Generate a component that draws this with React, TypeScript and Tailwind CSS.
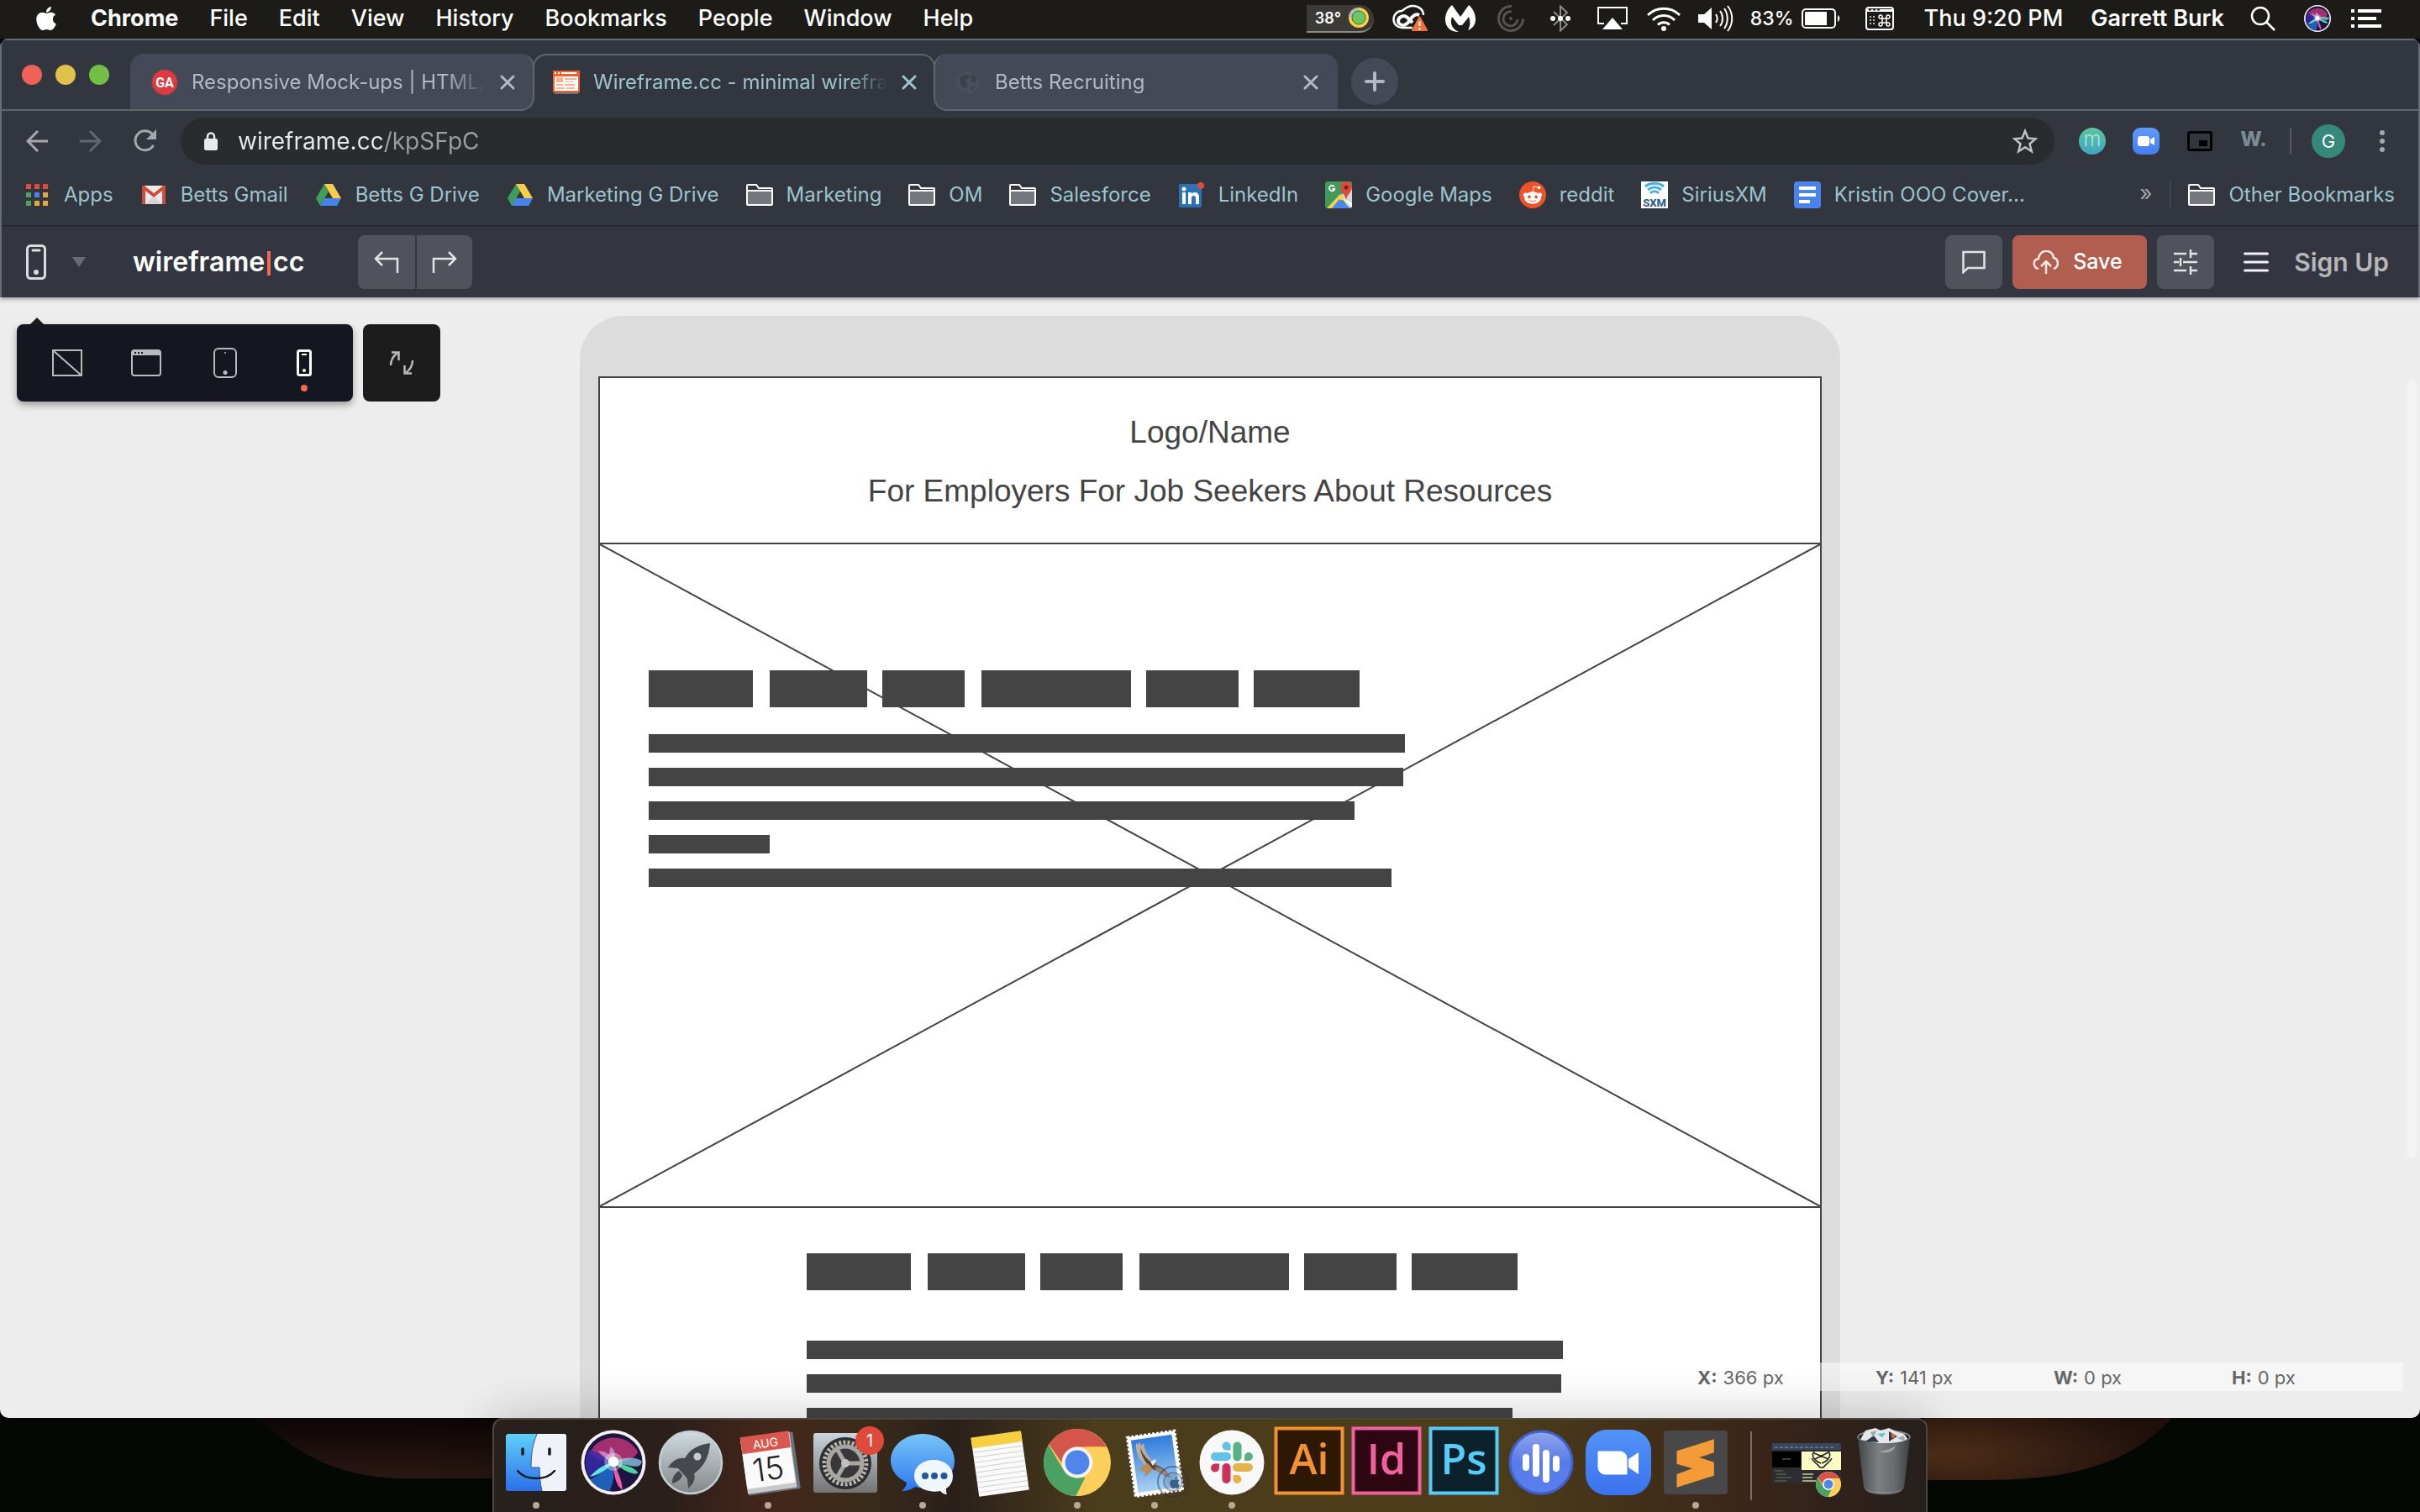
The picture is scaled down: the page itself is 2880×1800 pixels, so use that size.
import React from "react";
import type { ReactNode } from "react";
import { FaApple, FaRedditAlien } from "react-icons/fa";

/* ---------- menu bar ---------- */

const MENUS = ["File", "Edit", "View", "History", "Bookmarks", "People", "Window", "Help"];

function CreativeCloud() {
  return (
    <svg viewBox="0 0 42 34" className="h-[34px] w-[42px]" fill="none">
      <path d="M24 28H12A10 10 0 0 1 11 8c3-1 6-6 13-6 8 0 13 5 13 11" stroke="#fff" strokeWidth="2.500" />
      <path d="M24 22l-6-6c-4-4-11-1-11 4 0 3 3 5 6 5s5-2 8-6c3-5 7-8 11-6" stroke="#fff" strokeWidth="4" />
      <path d="M33 13.500l8.500 15.500h-17z" transform="translate(-.5 2)" fill="#f3703a" stroke="#f3703a" strokeWidth="2" strokeLinejoin="round" />
      <path d="M32.500 20v6M32.500 28v2.500" stroke="#fff" strokeWidth="2" />
    </svg>
  );
}

function Malware() {
  return (
    <svg viewBox="0 0 36 33" className="h-[33px] w-[36px]" fill="#fff">
      <path d="M8 0l10 14L28 0c6 5 8 12 8 17 0 7-4 11-9 13 3-5 3-11 1-16l-8 10h-4L8 14c-3 8 0 14 8 18-10 0-16-6-16-15C0 11 3 4 8 0z" />
    </svg>
  );
}

function Spiral() {
  return (
    <svg viewBox="0 0 32 32" className="size-8" fill="none" stroke="#55544f" strokeWidth="3">
      <path d="M17 1.500a14.500 14.500 0 1 0 13.500 15" />
      <path d="M17 8a8.500 8.500 0 1 0 7 9" />
      <circle cx="16" cy="16" r="2" fill="#55544f" stroke="none" />
    </svg>
  );
}

function Bluetooth() {
  return (
    <svg viewBox="0 0 24 32" className="h-8 w-6" fill="none">
      <path d="M4 8l16 15-8 7.500V1.500L20 9 4 24" stroke="#8b8a86" strokeWidth="2" />
      <circle cx="3" cy="16" r="3" fill="#fff" />
      <circle cx="12" cy="16" r="3" fill="#fff" />
      <circle cx="21" cy="16" r="3" fill="#fff" />
    </svg>
  );
}

function AirPlay() {
  return (
    <svg viewBox="0 0 36 28" className="h-7 w-9">
      <path d="M8 20H1V1h34v19h-7" fill="none" stroke="#fff" strokeWidth="2" />
      <path d="M18 13l12 14H6z" fill="#fff" />
    </svg>
  );
}

function Wifi() {
  return (
    <svg viewBox="0 0 42 30" className="h-[30px] w-[42px]" fill="none" stroke="#fff" strokeWidth="3">
      <path d="M2 11a27 27 0 0 1 38 0M8 17a18 18 0 0 1 26 0M14 22.500a10 10 0 0 1 14 0" />
      <circle cx="21" cy="27" r="3" fill="#fff" stroke="none" />
    </svg>
  );
}

function Volume() {
  return (
    <svg viewBox="0 0 42 32" className="h-8 w-[42px]" fill="none" stroke="#fff" strokeWidth="2">
      <path d="M0 11h7l9-8v26l-9-8H0z" fill="#fff" stroke="none" />
      <path d="M21 11c2 3 2 7 0 10M26 7c4 5 4 13 0 18M31 4c5 7 5 17 0 24M35 1c7 9 7 21 0 30" />
    </svg>
  );
}

function Battery() {
  return (
    <svg viewBox="0 0 46 24" className="h-6 w-[46px]" fill="none">
      <rect x="1" y="1" width="39" height="22" rx="4" stroke="#fff" strokeWidth="2" />
      <rect x="4" y="4" width="26" height="16" fill="#fff" />
      <path d="M43 8c3 2 3 6 0 8z" fill="#fff" />
    </svg>
  );
}

function KeyboardViewer() {
  return (
    <svg viewBox="0 0 34 28" className="h-7 w-[34px]" fill="none">
      <rect x="1" y="1" width="32" height="26" rx="3" stroke="#fff" strokeWidth="2" />
      <path d="M1 3h32v3H1z" fill="#fff" />
      <path d="M4 3.500h3M9 3.500h3M14 3.500h3" stroke="#222" strokeWidth="2" />
      <path d="M5 12h2M9 12h2M5 16h2M9 16h2M5 20h2M9 20h2" stroke="#bbb" strokeWidth="2" />
      <path
        d="M20 14h5v5h-5zM20 14h-2a2 2 0 1 1 2-2zM25 14v-2a2 2 0 1 1 2 2zM20 19v2a2 2 0 1 1-2-2zM25 19h2a2 2 0 1 1-2 2z"
        stroke="#fff"
        strokeWidth="1.500"
      />
    </svg>
  );
}

function SiriShapes() {
  return (
    <>
      <circle cx="50" cy="50" r="50" fill="#f4f1f4" />
      <circle cx="50" cy="50" r="45" fill="#1d1440" />
      <path d="M14 36C22 8 70 0 88 34c-8 14-26 18-38 14C36 44 28 50 14 36z" fill="#b93577" opacity=".85" />
      <path d="M12 30c14 4 32 14 38 20L14 74C4 60 6 44 12 30z" fill="#3a2bb0" opacity=".8" />
      <path d="M14 76c14-6 28-18 36-26 2 18 0 34-6 44C32 93 20 86 14 76z" fill="#1f67c4" opacity=".9" />
      <path d="M50 50c12-8 34-10 44-2-2 12-14 8-24 6-8-1-14-2-20-4z" fill="#8fd0e6" opacity=".75" />
      <path d="M50 50c14 2 34 8 38 16-6 6-26-6-38-16z" fill="#4fd39a" />
      <path d="M50 50c6 12 14 30 14 42-10-4-14-26-14-42z" fill="#ee5aa8" />
      <path d="M50 50c-10 12-24 20-36 22 8-10 22-20 36-22z" fill="#5fe3e6" />
      <path d="M50 50c-2-10-10-18-24-18 6 8 14 14 24 18zM50 50c4-8 4-18-4-24-4 8-2 16 4 24z" fill="#d9a4e0" opacity=".7" />
      <circle cx="50" cy="49" r="8" fill="#fff" />
      <circle cx="50" cy="49" r="14" fill="#fff" opacity=".35" />
    </>
  );
}

function MenuBar() {
  return (
    <header className="flex h-[46px] shrink-0 items-center bg-[#1c1b17] pb-[2px] text-[27px] font-medium text-white">
      <FaApple className="ml-[39px] size-[32px] shrink-0" />
      <nav className="ml-[37px] flex items-center gap-[37px]">
        <span className="font-bold">Chrome</span>
        {MENUS.map((m) => (
          <span key={m}>{m}</span>
        ))}
      </nav>
      <div className="ml-auto mr-[46px] flex items-center">
        <div className="mr-[22px] flex h-[33px] w-[80px] items-center justify-between rounded-l-md rounded-r-full border-b-2 border-[#8b8a86] bg-[#3b3a36] pl-[10px] pr-[6px] text-[18px] font-semibold">
          38°
          <svg viewBox="0 0 24 24" className="size-6">
            <circle cx="12" cy="12" r="10" fill="#6cc063" stroke="#fccf46" strokeWidth="4" />
            <path d="M2 12A10 10 0 0 1 12 2" stroke="#b9b8b4" strokeWidth="4" fill="none" />
            <circle cx="12" cy="12" r="8" fill="#70c466" stroke="#2c7a2c" strokeWidth="1" />
          </svg>
        </div>
        <CreativeCloud />
        <span className="w-[21px]" />
        <Malware />
        <span className="w-[26px]" />
        <Spiral />
        <span className="w-[31px]" />
        <Bluetooth />
        <span className="w-[32px]" />
        <AirPlay />
        <span className="w-[22px]" />
        <Wifi />
        <span className="w-[20px]" />
        <Volume />
        <span className="ml-[20px] text-[23px]">83%</span>
        <span className="w-[9px]" />
        <Battery />
        <span className="w-[30px]" />
        <KeyboardViewer />
        <time className="ml-[36px]">Thu 9:20 PM</time>
        <span className="ml-[33px] mr-[31px] font-semibold">Garrett Burk</span>
        <svg viewBox="0 0 30 30" className="size-[30px]" fill="none" stroke="#fff" strokeWidth="2.500">
          <circle cx="12" cy="12" r="10" />
          <path d="M19 19l10 10" />
        </svg>
        <svg viewBox="0 0 100 100" className="ml-[34px] size-8">
          <SiriShapes />
        </svg>
        <svg viewBox="0 0 36 22" className="ml-[24px] h-[22px] w-9" stroke="#fff" strokeWidth="4">
          <path d="M0 2h4M8 2h28M0 11h4M8 11h22M0 20h4M8 20h28" />
        </svg>
      </div>
    </header>
  );
}

/* ---------- browser tabs ---------- */

function CloseIcon() {
  return (
    <svg viewBox="0 0 18 18" className="size-[18px]" stroke="currentColor" strokeWidth="3" strokeLinecap="round">
      <path d="M2 2l14 14M16 2L2 16" />
    </svg>
  );
}

function TabBody({ icon, title, label, frame }: { icon: ReactNode; title: string; label: string; frame: string }) {
  return (
    <div className={"flex items-center " + frame}>
      <span className="flex w-8 shrink-0 justify-center">{icon}</span>
      <span className="ml-4 mr-4 min-w-0 flex-1 overflow-hidden whitespace-nowrap text-[24px] [mask-image:linear-gradient(to_right,black_86%,transparent)]">
        {title}
      </span>
      <button aria-label={label}>
        <CloseIcon />
      </button>
    </div>
  );
}

function TabStrip() {
  return (
    <div className="flex h-[84px] items-end bg-[#32363f]">
      <div className="flex h-full w-[153px] items-center gap-4 border-b-2 border-[#62656b] pl-6">
        <button aria-label="Close window" className="size-6 rounded-full bg-[#ee6259]" />
        <button aria-label="Minimise window" className="size-6 rounded-full bg-[#e1c04c]" />
        <button aria-label="Zoom window" className="size-6 rounded-full bg-[#71bf46]" />
      </div>
      <div className="h-[68px] w-[481px] rounded-t-[16px] rounded-br-[16px] border-b-2 border-r-2 border-[#62656b] bg-[#444957] text-[#b4b8c6]">
        <TabBody
          frame="h-[68px] pl-[25px] pr-[21px]"
          label="Close Responsive Mock-ups"
          title="Responsive Mock-ups | HTML,"
          icon={
            <svg viewBox="0 0 32 32" className="size-8">
              <circle cx="16" cy="16" r="14.500" fill="#dd3a42" stroke="#dd3a42" strokeWidth="2" strokeDasharray="2 1.500" />
              <text x="16" y="22" textAnchor="middle" fontSize="16" fontWeight="700" fill="#fff" fontFamily="Roboto">
                GA
              </text>
            </svg>
          }
        />
      </div>
      <div className="-ml-[2px] mt-[16px] h-[52px] w-[479px] self-start rounded-t-[16px] border-x-2 border-t-2 border-[#62656b] bg-[#32363f] text-[#9dc4cc]">
        <TabBody
          frame="h-[64px] pl-[22px] pr-[20px]"
          label="Close Wireframe.cc"
          title="Wireframe.cc - minimal wirefra"
          icon={
            <svg viewBox="0 0 32 28" className="h-7 w-8">
              <path d="M2 26h28v2H2z" fill="#6d6f76" />
              <path d="M0 0h32v26H0z" fill="#f0622d" />
              <path d="M2 7h28v17H2z" fill="#fff" />
              <path d="M2 2h2v2H2zM6 2h2v2H6zM10 2h18v2H10z" fill="#fff" />
              <path d="M4 8h8v6H4zM14 9h14v2H14zM14 13h10v1H14zM4 16h8v2H4zM14 16h12v2H14zM4 20h10v2H4zM16 20h10v2H16z" fill="#f6b08d" />
            </svg>
          }
        />
      </div>
      <div className="-ml-[2px] h-[68px] w-[481px] rounded-t-[16px] rounded-bl-[16px] border-b-2 border-l-2 border-[#62656b] bg-[#444957] text-[#b4b8c6]">
        <TabBody
          frame="h-[68px] pl-[23px] pr-[23px]"
          label="Close Betts Recruiting"
          title="Betts Recruiting"
          icon={
            <svg viewBox="0 0 28 28" className="size-7">
              <circle cx="14" cy="14" r="13" fill="#4b4f59" stroke="#4b4d57" strokeWidth="2" />
              <path d="M4 8l8-4 4 4-5 4 3 5-4 5-6-6zM18 3l7 7-3 5-5-3zM17 20l6-2-4 6z" fill="#3d424e" />
            </svg>
          }
        />
      </div>
      <div className="flex h-full flex-1 items-center border-b-2 border-[#62656b] pl-4 pt-[16px]">
        <button aria-label="New tab" className="flex size-14 items-center justify-center rounded-full bg-[#444957]">
          <svg viewBox="0 0 24 24" className="size-6" stroke="#b4b8c6" strokeWidth="4" strokeLinecap="round">
            <path d="M12 2v20M2 12h20" />
          </svg>
        </button>
      </div>
    </div>
  );
}

/* ---------- address bar ---------- */

function AddressBar() {
  return (
    <div className="flex h-[72px] items-center pl-[29px] pr-10">
      <button aria-label="Back">
        <svg viewBox="0 0 26 26" className="size-[26px]" fill="none" stroke="#a5a8ab" strokeWidth="3">
          <path d="M26 13H3M14 1L2 13l12 12" />
        </svg>
      </button>
      <button aria-label="Forward" className="ml-[38px]">
        <svg viewBox="0 0 26 26" className="size-[26px]" fill="none" stroke="#62666d" strokeWidth="3">
          <path d="M0 13h23M12 1l12 12-12 12" />
        </svg>
      </button>
      <button aria-label="Reload" className="ml-[38px]">
        <svg viewBox="0 0 28 28" className="size-7" fill="none" stroke="#a5a8ab" strokeWidth="3">
          <path d="M23.500 19A11.500 11.500 0 1 1 22 5.500" />
          <path d="M27 0v12H15z" fill="#a5a8ab" stroke="none" />
        </svg>
      </button>
      <form className="ml-[28px] flex h-14 flex-1 items-center rounded-full bg-[#292c2e] pl-7 pr-[20px]">
        <svg viewBox="0 0 16 22" className="h-[22px] w-4" fill="none">
          <rect y="8" width="16" height="14" rx="2" fill="#e8eaed" />
          <path d="M4 9V5.500a4 4 0 0 1 8 0V9" stroke="#e8eaed" strokeWidth="2.500" />
        </svg>
        <input
          aria-label="Address"
          defaultValue="wireframe.cc/kpSFpC"
          className="ml-6 min-w-0 flex-1 bg-[linear-gradient(to_right,#e8eaed_175px,#9b9ea1_175px)] bg-clip-text text-[28px] text-transparent outline-none"
        />
        <button type="button" aria-label="Bookmark this page">
          <svg viewBox="0 0 30 30" className="size-[30px]" fill="none" stroke="#bfc1c3" strokeWidth="2.500">
            <path d="M15 3l3.500 8.500 9 .7-7 6 2.300 9L15 22.300 7.200 27.200l2.300-9-7-6 9-.7z" />
          </svg>
        </button>
      </form>
      <div className="ml-[29px] flex items-center gap-8">
        <button aria-label="Momentum extension" className="flex size-8 items-center justify-center rounded-full bg-linear-to-t from-[#44a4c4] to-[#5bc39c] text-[24px] font-light leading-none text-[#a9e6dc]">
          <span className="pb-1">m</span>
        </button>
        <button aria-label="Zoom extension" className="flex size-8 items-center justify-center rounded-[9px] bg-linear-to-b from-[#5f9cf8] to-[#437df0]">
          <svg viewBox="0 0 20 12" className="h-3 w-5" fill="#fff">
            <rect width="14" height="12" rx="3" />
            <path d="M15 4l5-3v10l-5-3z" />
          </svg>
        </button>
        <button aria-label="Picture in picture extension">
          <svg viewBox="0 0 32 32" className="size-8">
            <rect x="2.500" y="5.500" width="27" height="21" rx="2" fill="none" stroke="#000" strokeWidth="3" />
            <rect x="15" y="15" width="10" height="7" fill="#000" />
          </svg>
        </button>
        <button aria-label="W extension" className="w-8 pb-1 text-[24px] font-extrabold leading-none text-[#7c8a92]">
          W.
        </button>
      </div>
      <span className="ml-[27px] h-8 w-[2px] bg-[#565a61]" />
      <button aria-label="Profile" className="ml-6 flex size-10 items-center justify-center rounded-full bg-[#36887a] text-[22px] text-white">
        G
      </button>
      <button aria-label="Browser menu" className="ml-[41px]">
        <svg viewBox="0 0 6 26" className="h-[26px] w-[6px]" fill="#a5a8ab">
          <circle cx="3" cy="3" r="3" />
          <circle cx="3" cy="13" r="3" />
          <circle cx="3" cy="23" r="3" />
        </svg>
      </button>
    </div>
  );
}

/* ---------- bookmarks ---------- */

function AppsIcon() {
  const colours = ["#e0493b", "#e0493b", "#e0493b", "#51a15b", "#4285f4", "#e6a935", "#51a15b", "#e6a935", "#e6a935"];
  return (
    <svg viewBox="0 0 26 26" className="size-[26px]">
      {colours.map((c, i) => (
        <rect key={i} x={(i % 3) * 10} y={Math.floor(i / 3) * 10} width="6" height="6" fill={c} />
      ))}
    </svg>
  );
}

function GmailIcon() {
  return (
    <svg viewBox="0 0 28 22" className="h-[22px] w-7">
      <rect width="28" height="22" rx="2" fill="#eceaea" />
      <path d="M4 22L14 12l10 10z" fill="#d6d4d4" />
      <path d="M0 2v18a2 2 0 0 0 2 2h2V6l10 8 10-8v16h2a2 2 0 0 0 2-2V2c0-2-2-2.500-3-1.700L14 9 3 .3C2-.5 0 0 0 2z" fill="#d24a3d" />
    </svg>
  );
}

function DriveIcon() {
  return (
    <svg viewBox="0 0 30 26" className="h-[26px] w-[30px]">
      <path d="M10 0l5 9L5 26l-5-9z" fill="#3f9c59" />
      <path d="M10 0h10l10 17H20z" fill="#fbcd4b" />
      <path d="M10 17h20l-5 9H5z" fill="#4684ec" />
    </svg>
  );
}

function FolderIcon() {
  return (
    <svg viewBox="0 0 32 26" className="h-[26px] w-8">
      <path d="M1 24V2c0-1 0-1 1-1h10l3 4h15c1 0 1 0 1 1v18c0 1 0 1-1 1H2c-1 0-1 0-1-1z" fill="#32363f" stroke="#fff" strokeWidth="2" />
      <path d="M2 9h28v15H2z" fill="#75777e" />
      <path d="M1 8h30" stroke="#fff" strokeWidth="2" />
    </svg>
  );
}

function LinkedInIcon() {
  return (
    <svg viewBox="0 0 30 30" className="size-[30px]">
      <rect y="2" width="27" height="28" rx="2" fill="#2a72b5" />
      <path d="M4 12h4v14H4zM11 12h4v2c2-3 9-3 9 4v8h-4v-7c0-4-5-4-5 0v7h-4z" fill="#fff" />
      <circle cx="6" cy="8" r="2.500" fill="#fff" />
      <circle cx="26" cy="4" r="4" fill="#e2493b" />
    </svg>
  );
}

function MapsIcon() {
  return (
    <svg viewBox="0 0 32 32" className="size-8">
      <rect width="32" height="32" rx="3" fill="#3f9a5c" />
      <path d="M17 17L32 8v22l-3 2z" fill="#d8d8d8" />
      <path d="M2 32L18 15l5 4-13 13z" fill="#f7d04c" />
      <path d="M8 32l9-11 13 11z" fill="#4c86ee" />
      <path d="M17 17l4 2 11 12v-5z" fill="#fff" />
      <path d="M25 0a7 7 0 0 1 7 7c0 5-5 7-7 15-2-8-7-10-7-15a7 7 0 0 1 7-7z" fill="#dc4a3d" />
      <circle cx="25" cy="7" r="2.500" fill="#7a2620" />
      <path d="M11 6.500a3.200 3.200 0 1 0 .3 2.500H8.500" fill="none" stroke="#fff" strokeWidth="1.800" />
    </svg>
  );
}

function SiriusIcon() {
  return (
    <svg viewBox="0 0 32 32" className="size-8">
      <rect width="32" height="32" fill="#fff" />
      <path d="M5 6c6-5 16-5 22 0M8 10c5-4 11-4 16 0M11 14c3-3 7-3 10 0" fill="none" stroke="#45aee6" strokeWidth="3" />
      <text x="16" y="30" textAnchor="middle" fontSize="13" fontWeight="800" fill="#2a5f86" fontFamily="Roboto">
        SXM
      </text>
    </svg>
  );
}

function DocsIcon() {
  return (
    <svg viewBox="0 0 32 32" className="size-8">
      <rect width="32" height="32" rx="4" fill="#4a83ee" />
      <path d="M6 8h20M6 16h20M6 24h13" stroke="#fff" strokeWidth="4" />
    </svg>
  );
}

const BOOKMARKS: { label: string; icon: ReactNode }[] = [
  { label: "Apps", icon: <AppsIcon /> },
  { label: "Betts Gmail", icon: <GmailIcon /> },
  { label: "Betts G Drive", icon: <DriveIcon /> },
  { label: "Marketing G Drive", icon: <DriveIcon /> },
  { label: "Marketing", icon: <FolderIcon /> },
  { label: "OM", icon: <FolderIcon /> },
  { label: "Salesforce", icon: <FolderIcon /> },
  { label: "LinkedIn", icon: <LinkedInIcon /> },
  { label: "Google Maps", icon: <MapsIcon /> },
  {
    label: "reddit",
    icon: (
      <span className="flex size-8 items-center justify-center rounded-full bg-[#ec5428]">
        <FaRedditAlien className="size-6 text-white" />
      </span>
    ),
  },
  { label: "SiriusXM", icon: <SiriusIcon /> },
  { label: "Kristin OOO Cover...", icon: <DocsIcon /> },
];

function Bookmark({ label, icon }: { label: string; icon: ReactNode }) {
  return (
    <a href="#" className="flex items-center gap-4 whitespace-nowrap">
      <span className="flex w-8 justify-center">{icon}</span>
      {label}
    </a>
  );
}

function BookmarksBar() {
  return (
    <nav className="flex h-[66px] items-center border-b-2 border-[#252931] pb-2 pl-[26px] pr-[28px] text-[24px] text-[#9dc4cc]">
      <div className="flex items-center gap-8">
        {BOOKMARKS.map((b) => (
          <Bookmark key={b.label} {...b} />
        ))}
      </div>
      <button aria-label="More bookmarks" className="ml-auto pb-1 text-[26px] leading-none text-[#a5a8ab]">
        »
      </button>
      <span className="mx-[21px] h-8 w-px bg-[#50545c]" />
      <Bookmark label="Other Bookmarks" icon={<FolderIcon />} />
    </nav>
  );
}

/* ---------- editor header ---------- */

function EditorHeader() {
  return (
    <div className="flex h-[84px] items-center bg-[#333640] pl-[29px] pr-[35px]">
      <button aria-label="Choose device" className="flex items-center gap-[31px]">
        <svg viewBox="0 0 24 42" className="h-[42px] w-6">
          <rect x="1.500" y="1.500" width="21" height="39" rx="4" fill="none" stroke="#dcdcde" strokeWidth="3" />
          <path d="M8 7h8" stroke="#dcdcde" strokeWidth="3" strokeLinecap="round" />
          <circle cx="12" cy="33" r="3" fill="#dcdcde" />
        </svg>
        <svg viewBox="0 0 16 12" className="h-3 w-4" fill="#686b73">
          <path d="M0 0h16L8 12z" />
        </svg>
      </button>
      <h1 className="ml-[56px] flex items-center text-[32px] font-semibold text-white">
        wireframe
        <span className="mx-[3px] mt-[2px] h-[29px] w-[4px] bg-[#f26a50]" />
        cc
      </h1>
      <div className="ml-[64px] flex gap-[2px]">
        <button aria-label="Undo" className="flex h-16 w-[68px] items-center justify-center rounded-l-lg bg-[#50535c]">
          <svg viewBox="0 0 30 26" className="h-[26px] w-[30px]" fill="none" stroke="#e3e3e5" strokeWidth="2.500">
            <path d="M10 1L2 9l8 8M2 9h26v17" />
          </svg>
        </button>
        <button aria-label="Redo" className="flex h-16 w-[66px] items-center justify-center rounded-r-lg bg-[#50535c]">
          <svg viewBox="0 0 30 26" className="h-[26px] w-[30px]" fill="none" stroke="#e3e3e5" strokeWidth="2.500">
            <path d="M20 1l8 8-8 8M28 9H2v17" />
          </svg>
        </button>
      </div>
      <div className="ml-auto flex items-center gap-3">
        <button aria-label="Comments" className="flex h-16 w-[68px] items-center justify-center rounded-lg bg-[#50535c]">
          <svg viewBox="0 0 28 28" className="size-7" fill="none" stroke="#e3e3e5" strokeWidth="2.500">
            <path d="M1.500 2h25v19H7l-5.500 5z" />
          </svg>
        </button>
        <button className="flex h-16 w-[160px] items-center gap-4 rounded-lg bg-[#b15d4f] pl-6 text-[25px] font-medium text-white">
          <svg viewBox="0 0 32 28" className="h-7 w-8" fill="none" stroke="#fbe9e6" strokeWidth="2.500">
            <path d="M7 22c-7-2-7-11 0-12C8-2 24-2 25 9c6 1 7 11 0 13" />
            <path d="M16 28V13M10 19l6-6 6 6" />
          </svg>
          Save
        </button>
        <button aria-label="Settings" className="flex h-16 w-[68px] items-center justify-center rounded-lg bg-[#50535c]">
          <svg viewBox="0 0 28 30" className="h-[30px] w-7" fill="none" stroke="#e3e3e5" strokeWidth="2.500">
            <path d="M0 5h15M20 5h8M20 0v10M0 15h6M11 15h17M8 10v10M0 25h15M20 25h8M20 20v10" />
          </svg>
        </button>
        <button aria-label="Menu" className="ml-[23px]">
          <svg viewBox="0 0 30 24" className="h-6 w-[30px]" stroke="#f1f1f1" strokeWidth="3" strokeLinecap="round">
            <path d="M1.500 2h27M1.500 12h27M1.500 22h27" />
          </svg>
        </button>
        <a href="#" className="ml-[18px] text-[30px] font-semibold text-[#b7b7b9]">
          Sign Up
        </a>
      </div>
    </div>
  );
}

/* ---------- device picker ---------- */

function DevicePicker() {
  return (
    <div className="absolute left-[20px] top-[24px] text-[#b9babd]">
      <svg viewBox="0 0 16 8" className="ml-4 h-2 w-4" fill="#1c1c1c">
        <path d="M8 0l8 8H0z" />
      </svg>
      <div className="flex gap-3">
        <div className="flex h-[92px] w-[400px] items-center rounded-lg bg-[#14171f] pl-[13px] shadow-[0_4px_8px_rgba(0,0,0,0.35)]">
          <button aria-label="No frame" className="flex w-[94px] justify-center">
            <svg viewBox="0 0 36 32" className="h-8 w-9" fill="none" stroke="currentColor" strokeWidth="2">
              <path d="M1 1h34v30H1zM1 1l34 30" />
            </svg>
          </button>
          <button aria-label="Browser window" className="flex w-[94px] justify-center">
            <svg viewBox="0 0 36 32" className="h-8 w-9">
              <rect x="1" y="1" width="34" height="30" rx="3" fill="none" stroke="currentColor" strokeWidth="2" />
              <path d="M2 1h32v6H2z" fill="currentColor" />
              <path d="M4 4h2M8 4h2M12 4h2" stroke="#14171f" strokeWidth="2" />
            </svg>
          </button>
          <button aria-label="Tablet" className="flex w-[94px] justify-center">
            <svg viewBox="0 0 28 36" className="h-9 w-7">
              <rect x="1" y="1" width="26" height="34" rx="5" fill="none" stroke="currentColor" strokeWidth="2" />
              <circle cx="14" cy="6" r="1" fill="currentColor" />
              <circle cx="14" cy="29.500" r="2.500" fill="currentColor" />
            </svg>
          </button>
          <button aria-label="Phone" className="relative flex w-[94px] justify-center text-white">
            <svg viewBox="0 0 18 32" className="h-8 w-[18px]">
              <rect x="1.500" y="1.500" width="15" height="29" rx="2" fill="none" stroke="currentColor" strokeWidth="3" />
              <path d="M6 6h6" stroke="currentColor" strokeWidth="2" />
              <circle cx="9" cy="25" r="2" fill="currentColor" />
            </svg>
            <span className="absolute left-[43px] top-[42px] size-2 rounded-full bg-[#f26a50]" />
          </button>
        </div>
        <button aria-label="Rotate device" className="flex h-[92px] w-[92px] items-center justify-center rounded-lg bg-[#1c1c1c]">
          <svg viewBox="0 0 30 28" className="h-7 w-[30px]" fill="none" stroke="currentColor" strokeWidth="2.500">
            <path d="M2 17C2 11 5 6 10 2M3 1.500h8.500V11" />
            <path d="M28 11c0 6-3 11-8 15M27 26.500h-8.500V17" />
          </svg>
        </button>
      </div>
    </div>
  );
}

/* ---------- wireframe canvas ---------- */

function TextBlock({ spacing }: { spacing: string }) {
  return (
    <div className={"relative flex flex-col " + spacing}>
      <div className="flex gap-[18px]">
        <span className="mr-[2px] h-11 w-[124px] bg-[#444]" />
        <span className="h-11 w-[116px] bg-[#444]" />
        <span className="mr-[2px] h-11 w-[98px] bg-[#444]" />
        <span className="h-11 w-[178px] bg-[#444]" />
        <span className="h-11 w-[110px] bg-[#444]" />
        <span className="h-11 w-[126px] bg-[#444]" />
      </div>
      <div className="flex flex-col gap-[18px]">
        <span className="h-[22px] w-[900px] bg-[#444]" />
        <span className="h-[22px] w-[898px] bg-[#444]" />
        <span className="h-[22px] w-[840px] bg-[#444]" />
        <span className="h-[22px] w-[144px] bg-[#444]" />
        <span className="h-[22px] w-[884px] bg-[#444]" />
      </div>
    </div>
  );
}

function Device() {
  return (
    <div className="mx-auto mt-[22px] w-[1500px] shrink-0 rounded-t-[52px] bg-[#dcdcdc] px-[22px] pt-[72px]">
      <div className="border-2 border-[#444] bg-white">
        <div className="border-b-2 border-[#444] pb-[26px] pt-[30px] text-center font-['Liberation_Sans',Arial,sans-serif] text-[37px] leading-[70px] text-[#444]">
          <p>Logo/Name</p>
          <p>For Employers For Job Seekers About Resources</p>
        </div>
        <div className="relative h-[790px] border-b-2 border-[#444] pl-[58px] pt-[150px]">
          <svg viewBox="0 0 1452 788" preserveAspectRatio="none" className="absolute inset-0 size-full" stroke="#444" strokeWidth="2">
            <path d="M0 0l1452 788M1452 0L0 788" />
          </svg>
          <TextBlock spacing="gap-8" />
        </div>
        <div className="pl-[246px] pt-[54px]">
          <TextBlock spacing="gap-[60px]" />
        </div>
      </div>
    </div>
  );
}

function StatusBar() {
  const values = [
    ["X:", "366 px"],
    ["Y:", "141 px"],
    ["W:", "0 px"],
    ["H:", "0 px"],
  ];
  return (
    <dl className="absolute bottom-8 right-5 flex h-[34px] items-center bg-white/50 pl-2 pt-[2px] text-[22px] text-[#666]">
      {values.map(([k, v]) => (
        <div key={k} className="flex w-[212px] gap-[7px] last:w-[204px]">
          <dt className="font-bold">{k}</dt>
          <dd>{v}</dd>
        </div>
      ))}
    </dl>
  );
}

/* ---------- dock ---------- */

function DockSvg({ children }: { children: ReactNode }) {
  return (
    <svg viewBox="0 0 92 96" className="h-24 w-[92px]">
      {children}
    </svg>
  );
}

function FinderIcon() {
  return (
    <DockSvg>
      <defs>
        <linearGradient id="finderBlue" x1="0" y1="0" x2="0" y2="1">
          <stop offset="0" stopColor="#5fd0f8" />
          <stop offset="1" stopColor="#2d6fea" />
        </linearGradient>
      </defs>
      <rect x="10" y="17" width="72" height="68" rx="3" fill="url(#finderBlue)" />
      <path d="M47 17h32a3 3 0 0 1 3 3v62a3 3 0 0 1-3 3H53c-2-9-3-18-3-28H40c0-16 2-28 7-40z" fill="#eff2f8" />
      <path d="M47 17c-5 12-7 24-7 40h10c0 10 1 19 3 28" fill="none" stroke="#2a5aa5" strokeWidth="1" />
      <path d="M30 35v6M62 35v6" stroke="#131a26" strokeWidth="3.500" strokeLinecap="round" />
      <path d="M24 61c10 12 34 12 44 0" fill="none" stroke="#131a26" strokeWidth="2.500" strokeLinecap="round" />
    </DockSvg>
  );
}

function SiriIcon() {
  return (
    <DockSvg>
      <g transform="translate(7.500 12.500) scale(.77)">
        <SiriShapes />
      </g>
    </DockSvg>
  );
}

function LaunchpadIcon() {
  return (
    <DockSvg>
      <defs>
        <linearGradient id="launch" x1="0" y1="0" x2="0" y2="1">
          <stop offset="0" stopColor="#cfdbe0" />
          <stop offset="1" stopColor="#858789" />
        </linearGradient>
      </defs>
      <circle cx="46" cy="51" r="37" fill="url(#launch)" stroke="#c3cfd4" strokeWidth="2.500" />
      <path d="M69 28c-14 2-24 7-30 18-8-1-14 2-20 11l12 1 10 11c1 1 2 8 2 13 6-5 9-11 7-18 11-7 18-19 19-36z" fill="#45494e" />
      <circle cx="54" cy="44" r="4.500" fill="#c3cdd1" />
      <path d="M32 61c-6 4-8 8-8 15 7-2 11-5 12-10z" fill="#45494e" />
    </DockSvg>
  );
}

function CalendarIcon() {
  return (
    <DockSvg>
      <g transform="rotate(-8 46 50)">
        <rect x="18" y="19" width="62" height="68" fill="#66737f" />
        <rect x="17" y="18" width="59" height="67" fill="#c9c9c9" />
        <path d="M17 18h58v61H17z" fill="#fafafa" />
        <path d="M17 17h58v20H17z" fill="#d9574e" />
        <text x="46" y="33" textAnchor="middle" fontSize="14" fill="#fff" fontFamily="Inter">
          AUG
        </text>
        <text x="45" y="72" textAnchor="middle" fontSize="38" fontWeight="300" fill="#222" fontFamily="Inter">
          15
        </text>
      </g>
    </DockSvg>
  );
}

function SettingsIcon() {
  return (
    <DockSvg>
      <defs>
        <linearGradient id="prefs" x1="0" y1="0" x2="0" y2="1">
          <stop offset="0" stopColor="#c9d4dc" />
          <stop offset="1" stopColor="#747474" />
        </linearGradient>
      </defs>
      <rect x="8" y="16" width="76" height="71" rx="3" fill="url(#prefs)" />
      <circle cx="46" cy="52" r="31" fill="#2e2e30" />
      <circle cx="46" cy="52" r="25" fill="none" stroke="#b9b6b2" strokeWidth="5" strokeDasharray="3 2.200" />
      <circle cx="46" cy="52" r="20" fill="#38383a" stroke="#a9a6a2" strokeWidth="5" />
      <path d="M46 52h19M46 52l-10-17M46 52L36 69" stroke="#a9a6a2" strokeWidth="5" />
      <circle cx="46" cy="52" r="5" fill="#c4c1bd" />
      <circle cx="75" cy="25" r="17" fill="#e04a3d" />
      <text x="75" y="32" textAnchor="middle" fontSize="20" fill="#fff" fontFamily="Inter">
        1
      </text>
    </DockSvg>
  );
}

function MessagesIcon() {
  return (
    <DockSvg>
      <defs>
        <linearGradient id="msg" x1="0" y1="0" x2="0" y2="1">
          <stop offset="0" stopColor="#77c5f8" />
          <stop offset="1" stopColor="#2c78ee" />
        </linearGradient>
      </defs>
      <path d="M46 17c21 0 38 14 38 32S67 81 46 81c-3 0-6 0-9-1-4 3-9 5-16 5 4-3 6-7 6-10C15 69 8 60 8 49c0-18 17-32 38-32z" fill="url(#msg)" />
      <path d="M59 48c13 0 23 8 23 19 0 7-3 12-8 15 0 3 0 5 1 7-4 0-6-2-8-4-16 3-31-5-31-18 0-11 10-19 23-19z" fill="#f0f6fd" />
      <circle cx="49" cy="67" r="4" fill="#23549c" />
      <circle cx="60" cy="67" r="4" fill="#23549c" />
      <circle cx="71.500" cy="67" r="4" fill="#23549c" />
    </DockSvg>
  );
}

function NotesIcon() {
  return (
    <DockSvg>
      <g transform="rotate(-8 46 52)">
        <rect x="16" y="18" width="60" height="70" fill="#fafafa" />
        <rect x="16" y="17" width="60" height="13" fill="#f7cf43" />
        <path d="M16 35h60M16 41h60M16 47h60M16 53h60M16 59h60M16 65h60M16 71h60M16 77h60M16 83h60" stroke="#d0d0d2" strokeWidth="1" />
      </g>
    </DockSvg>
  );
}

function ChromeShapes() {
  return (
    <>
      <circle cx="50" cy="50" r="50" fill="#fbcf5a" />
      <path d="M50 0a50 50 0 0 1 43.500 27H50C36 27 28 38 28 52L8 23A50 50 0 0 1 50 0z" fill="#d4564a" />
      <path d="M7.500 24L30 62c6 10 17 13 32 10L48 100A50 50 0 0 1 7.500 24z" fill="#4aa163" />
      <path d="M93.500 27A50 50 0 0 1 48 100l22-38c5-12 3-24-8-35z" fill="#fbcf5a" />
      <circle cx="50" cy="50" r="23" fill="#f3f3f3" />
      <circle cx="50" cy="50" r="18" fill="#5086ec" />
    </>
  );
}

function ChromeIcon() {
  return (
    <DockSvg>
      <g transform="translate(6 11) scale(.8)">
        <ChromeShapes />
      </g>
    </DockSvg>
  );
}

function MailIcon() {
  return (
    <DockSvg>
      <defs>
        <linearGradient id="sky" x1="0" y1="0" x2="0" y2="1">
          <stop offset="0" stopColor="#2f7cdc" />
          <stop offset="1" stopColor="#a9d1f3" />
        </linearGradient>
      </defs>
      <g transform="rotate(-8 46 52)">
        <rect x="18" y="17" width="57" height="71" fill="#fff" stroke="#fff" strokeWidth="3" strokeDasharray="3 2" />
        <rect x="22" y="21" width="49" height="63" fill="url(#sky)" />
      </g>
      <path d="M24 28l3 2 1-4 2 5 3-3c1 8 4 13 9 20l-7 6c-7-5-12-14-11-26z" fill="#b9ae9f" />
      <path d="M29 33c2 7 7 13 13 18 3-3 5-4 6-2l-1 5c6 2 12 5 15 10l-9-2c-5-1-9-3-12-5-6-6-11-14-12-24z" fill="#5a412e" />
      <path d="M46 56c8 1 15 5 20 13l-7-1-3-2-7-4z" fill="#96877a" />
      <path d="M38 52c-4 2-8 4-11 8l8 2-1 6c4-2 7-5 10-9z" fill="#b98c5b" />
      <path d="M41 50l6-3 1 3-4 5z" fill="#efe8dc" />
      <circle cx="68" cy="74" r="18" fill="none" stroke="#24344a" strokeOpacity=".45" strokeWidth="2" />
      <circle cx="68" cy="74" r="11" fill="#49678c" fillOpacity=".25" stroke="#24344a" strokeOpacity=".4" strokeWidth="1.500" />
      <FaApple x="62" y="67" width="13" height="13" color="#3c5f8c" />
    </DockSvg>
  );
}

function SlackIcon() {
  return (
    <DockSvg>
      <circle cx="46" cy="51" r="38.500" fill="#f8f8f8" />
      <path d="M39.500 26.500a5 5 0 1 0 0 10h5v-5a5 5 0 0 0-5-5z" fill="#61c2ec" />
      <rect x="21" y="39" width="24" height="10" rx="5" fill="#61c2ec" />
      <rect x="47.500" y="26.500" width="10" height="23" rx="5" fill="#58b283" />
      <path d="M71 44a5 5 0 1 0-10 0v5h5a5 5 0 0 0 5-5z" fill="#58b283" />
      <rect x="47" y="52" width="24" height="10" rx="5" fill="#e4b34b" />
      <path d="M52.500 76a5 5 0 1 0 0-10h-5v5a5 5 0 0 0 5 5z" fill="#e4b34b" />
      <rect x="34.500" y="52" width="10" height="24" rx="5" fill="#cd3159" />
      <path d="M21 57.500a5 5 0 1 0 10 0v-5h-5a5 5 0 0 0-5 5z" fill="#cd3159" />
    </DockSvg>
  );
}

function AdobeIcon({ label, fg, bg }: { label: string; fg: string; bg: string }) {
  return (
    <DockSvg>
      <rect x="6.500" y="10.500" width="79" height="77" fill={bg} stroke={fg} strokeWidth="4" />
      <text x="46" y="65" textAnchor="middle" fontSize="50" fontWeight="600" fill={fg} fontFamily="Open Sans">
        {label}
      </text>
    </DockSvg>
  );
}

function WaveIcon() {
  return (
    <DockSvg>
      <defs>
        <linearGradient id="wave" x1="0" y1="0" x2="0" y2="1">
          <stop offset="0" stopColor="#93a5ee" />
          <stop offset="0.500" stopColor="#577be6" />
          <stop offset="1" stopColor="#5a7fee" />
        </linearGradient>
      </defs>
      <circle cx="46" cy="51" r="37" fill="url(#wave)" stroke="#3e62cc" strokeWidth="3" />
      <path d="M28 45v12M40 33v31M52 40v31M64 47v11" stroke="#fff" strokeWidth="8" strokeLinecap="round" />
    </DockSvg>
  );
}

function ZoomIcon() {
  return (
    <DockSvg>
      <defs>
        <linearGradient id="zoomBlue" x1="0" y1="0" x2="0" y2="1">
          <stop offset="0" stopColor="#5294f8" />
          <stop offset="1" stopColor="#3a72ee" />
        </linearGradient>
      </defs>
      <rect x="7" y="12" width="78" height="78" rx="25" fill="url(#zoomBlue)" />
      <path d="M22 38h26a8 8 0 0 1 8 8v19H30a8 8 0 0 1-8-8z" fill="#fff" stroke="#fff" strokeWidth="1" strokeLinejoin="round" />
      <path d="M58 47l12-8v26l-12-8z" fill="#fff" />
    </DockSvg>
  );
}

function SublimeIcon() {
  return (
    <DockSvg>
      <rect x="8" y="13" width="76" height="76" rx="4" fill="#484848" />
      <path d="M23.500 37.300L67.800 23.300V39.300L50 45L67.800 50.700V66.700L23.500 80.700V65L42 58.300L23.500 52.700z" fill="#f39c37" />
      <path d="M42 58.300L67.800 66.700L36 56.500z" fill="#c77a22" />
    </DockSvg>
  );
}

function ThumbnailIcon() {
  return (
    <DockSvg>
      <rect x="5" y="28" width="82" height="48" fill="#2c2d30" />
      <rect x="5" y="28" width="82" height="8" fill="#38455a" />
      <path d="M8 33h70" stroke="#7f97b5" strokeWidth="1" strokeDasharray="4 2" />
      <rect x="5" y="38" width="34" height="19" fill="#000" />
      <path d="M17 47h10" stroke="#777" strokeWidth="1" />
      <rect x="40" y="38" width="47" height="22" fill="#fdfbc4" />
      <path d="M55 38c-4 5 0 11 8 14M72 38c4 5 0 11-8 14M52 46c2 5 7 6 10 11h4c3-5 8-6 10-11M55 40l17 7M72 39l-16 8" fill="none" stroke="#222" strokeWidth="1.500" />
      <path d="M41 65h13M41 69h12M41 73h16" stroke="#cfcda0" strokeWidth="1.500" />
      <path d="M8 61h10M10 65h12M10 69h18M8 73h14" stroke="#6e7358" strokeWidth="1" />
      <g transform="translate(57 62) scale(.3)">
        <ChromeShapes />
      </g>
    </DockSvg>
  );
}

function TrashIcon() {
  return (
    <DockSvg>
      <defs>
        <linearGradient id="bin" x1="0" y1="0" x2="1" y2="0">
          <stop offset="0" stopColor="#44474a" />
          <stop offset="0.400" stopColor="#7c8083" />
          <stop offset="0.700" stopColor="#686c6f" />
          <stop offset="1" stopColor="#3e4144" />
        </linearGradient>
      </defs>
      <ellipse cx="46" cy="21" rx="31" ry="8" fill="#2d3033" stroke="#8e9396" strokeWidth="1.500" />
      <path d="M18 24l6-11 12-3 6 3 10-3 8 4 10 3 4 6-8 5-18 2z" fill="#e6e6e8" />
      <path d="M24 26l10-7 6 8zM52 14l10 6-10 6z" fill="#2c3648" />
      <path d="M38 17l10-1-4 5z" fill="#45c6d8" />
      <path d="M54 16l7 3-5 4z" fill="#d2683b" />
      <path d="M30 15l8-2-5 8zM62 22l8-3 1 7z" fill="#a5a6aa" />
      <path d="M15 22c8 8 54 8 62 0l-7 58c-1 11-47 11-48 0z" fill="url(#bin)" />
      <path d="M40 38c8-1 14-3 20-7-2 7-10 10-20 7z" fill="#c3c6c8" opacity=".6" />
      <path d="M23 82c6 6 40 6 46 0-2 10-44 10-46 0z" fill="#aeb2b5" opacity=".4" />
    </DockSvg>
  );
}

function DockItem({ children, label, running }: { children: ReactNode; label: string; running?: boolean }) {
  return (
    <button aria-label={label} className="flex w-[92px] flex-col items-center">
      {children}
      {running && <span className="mt-[2px] size-2 rounded-full bg-[#b6a995]" />}
    </button>
  );
}

function Dock() {
  return (
    <footer className="relative flex h-[112px] shrink-0 justify-center bg-[#040802]">
      <svg viewBox="0 0 2880 112" preserveAspectRatio="none" className="absolute inset-0 size-full">
        <defs>
          <linearGradient id="glow" x1="0" y1="0" x2="0" y2="1">
            <stop offset="0" stopColor="#0b0605" />
            <stop offset="1" stopColor="#2a1712" />
          </linearGradient>
          <radialGradient id="glowRight" cx="0" cy="0.600" r="1">
            <stop offset="0" stopColor="#52301a" />
            <stop offset="1" stopColor="#1d0f0a" />
          </radialGradient>
        </defs>
        <path d="M305 0c40 30 80 72 180 72h110V0z" fill="url(#glow)" />
        <path d="M2290 74h70c120 0 180-26 225-74h-295z" fill="url(#glowRight)" />
      </svg>
      <div className="relative flex rounded-t-[12px] border-x-2 border-t-2 border-[#4d463c] bg-[linear-gradient(to_right,#27201c,#2a1f1a_12%,#44261a_19%,#3a2c1a_26%,#2a201a_32%,#4b3c1b_42%,#4d3d1b_70%,#3a2518_88%,#251f1c)] px-1 shadow-[0_0_60px_rgba(0,0,0,0.22)]">
        <DockItem label="Finder" running><FinderIcon /></DockItem>
        <DockItem label="Siri"><SiriIcon /></DockItem>
        <DockItem label="Launchpad"><LaunchpadIcon /></DockItem>
        <DockItem label="Calendar" running><CalendarIcon /></DockItem>
        <DockItem label="System Preferences"><SettingsIcon /></DockItem>
        <DockItem label="Messages" running><MessagesIcon /></DockItem>
        <DockItem label="Notes"><NotesIcon /></DockItem>
        <DockItem label="Chrome" running><ChromeIcon /></DockItem>
        <DockItem label="Mail" running><MailIcon /></DockItem>
        <DockItem label="Slack" running><SlackIcon /></DockItem>
        <DockItem label="Illustrator"><AdobeIcon label="Ai" fg="#f29233" bg="#2d1804" /></DockItem>
        <DockItem label="InDesign"><AdobeIcon label="Id" fg="#ef619f" bg="#2d0612" /></DockItem>
        <DockItem label="Photoshop"><AdobeIcon label="Ps" fg="#56cdf8" bg="#0b222d" /></DockItem>
        <DockItem label="Audio"><WaveIcon /></DockItem>
        <DockItem label="Zoom"><ZoomIcon /></DockItem>
        <DockItem label="Sublime Text" running><SublimeIcon /></DockItem>
        <span className="mx-[19px] mt-[14px] h-[82px] w-[2px] shrink-0 bg-[#7c6f5c]" />
        <DockItem label="Minimised window"><ThumbnailIcon /></DockItem>
        <DockItem label="Trash"><TrashIcon /></DockItem>
      </div>
    </footer>
  );
}

export default function App() {
  return (
    <div className="flex h-screen flex-col overflow-hidden bg-black font-['Inter','Noto_Sans',sans-serif]">
      <MenuBar />
      <main className="flex min-h-0 flex-1 flex-col overflow-hidden rounded-[10px] bg-[#ededed]">
        <div className="relative z-10 border-x-2 border-t-2 border-[#666b74] bg-[#32363f] shadow-[0_2px_5px_rgba(0,0,0,0.35)]">
          <TabStrip />
          <AddressBar />
          <BookmarksBar />
          <EditorHeader />
        </div>
        <div className="relative flex min-h-0 flex-1 flex-col overflow-hidden">
          <Device />
          <DevicePicker />
          <StatusBar />
          <span className="absolute right-1 top-[98px] h-[926px] w-3 rounded-full bg-[#f3f3f3]" />
        </div>
      </main>
      <Dock />
    </div>
  );
}
